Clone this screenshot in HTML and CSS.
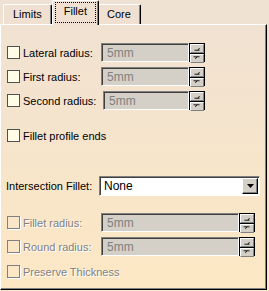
FILE: index.html
```html
<!DOCTYPE html>
<html lang="en">
<head>
  <meta charset="UTF-8" />
  <title>Fillet</title>
  <link rel="stylesheet" href="styles.css">
</head>
<body>
  <div class="dialog">
    <div class="tabs">
      <div class="tab">Limits</div>
      <div class="tab active"><span class="focus">Fillet</span></div>
      <div class="tab">Core</div>
    </div>

    <div class="panel">
      <div class="row">
        <label class="check"><span class="box"></span>Lateral radius:</label>
        <div class="field"><span class="value">5mm</span></div>
        <div class="spin">
          <span class="spin-btn"><svg width="14" height="7" viewBox="0 0 14 7"><path d="M4 5.5H10M8 5.5L10 3" stroke="#000" fill="none"/></svg></span>
          <span class="spin-btn"><svg width="14" height="7" viewBox="0 0 14 7"><path d="M3 1.5H10M7 1.5L5 4" stroke="#000" fill="none"/></svg></span>
        </div>
      </div>
      <div class="row">
        <label class="check"><span class="box"></span>First radius:</label>
        <div class="field"><span class="value">5mm</span></div>
        <div class="spin">
          <span class="spin-btn"><svg width="14" height="7" viewBox="0 0 14 7"><path d="M4 5.5H10M8 5.5L10 3" stroke="#000" fill="none"/></svg></span>
          <span class="spin-btn"><svg width="14" height="7" viewBox="0 0 14 7"><path d="M3 1.5H10M7 1.5L5 4" stroke="#000" fill="none"/></svg></span>
        </div>
      </div>
      <div class="row">
        <label class="check"><span class="box"></span>Second radius:</label>
        <div class="field shifted"><span class="value">5mm</span></div>
        <div class="spin">
          <span class="spin-btn"><svg width="14" height="7" viewBox="0 0 14 7"><path d="M4 5.5H10M8 5.5L10 3" stroke="#000" fill="none"/></svg></span>
          <span class="spin-btn"><svg width="14" height="7" viewBox="0 0 14 7"><path d="M3 1.5H10M7 1.5L5 4" stroke="#000" fill="none"/></svg></span>
        </div>
      </div>

      <div class="row profile">
        <label class="check solo"><span class="box"></span>Fillet profile ends</label>
      </div>

      <div class="row combo-row">
        <span class="plain">Intersection Fillet:</span>
        <div class="combo">
          <span class="combo-value">None</span>
          <span class="combo-btn"><svg width="7" height="4" viewBox="0 0 7 4"><path d="M0 0H7L3.5 4Z" fill="#000"/></svg></span>
        </div>
      </div>

      <div class="row off">
        <label class="check"><span class="box"></span>Fillet radius:</label>
        <div class="field wide"><span class="value">5mm</span></div>
        <div class="spin">
          <span class="spin-btn"><svg width="14" height="7" viewBox="0 0 14 7"><path d="M4 5.5H10M8 5.5L10 3" stroke="#000" fill="none"/></svg></span>
          <span class="spin-btn"><svg width="14" height="7" viewBox="0 0 14 7"><path d="M3 1.5H10M7 1.5L5 4" stroke="#000" fill="none"/></svg></span>
        </div>
      </div>
      <div class="row off">
        <label class="check"><span class="box"></span>Round radius:</label>
        <div class="field wide"><span class="value">5mm</span></div>
        <div class="spin">
          <span class="spin-btn"><svg width="14" height="7" viewBox="0 0 14 7"><path d="M4 5.5H10M8 5.5L10 3" stroke="#000" fill="none"/></svg></span>
          <span class="spin-btn"><svg width="14" height="7" viewBox="0 0 14 7"><path d="M3 1.5H10M7 1.5L5 4" stroke="#000" fill="none"/></svg></span>
        </div>
      </div>
      <div class="row off thick">
        <label class="check solo"><span class="box"></span>Preserve Thickness</label>
      </div>
    </div>
  </div>
</body>
</html>
```

FILE: styles.css
```css
* {
  box-sizing: border-box;
}
body {
  margin: 0;
  background-color: #fbe8c8;
  font-family: "Liberation Sans", Arial, sans-serif;
  font-size: 11px;
  color: #000;
}
.dialog {
  width: 269px;
  height: 291px;
  display: flex;
  flex-direction: column;
  background: linear-gradient(#efe1d3, #fde8c4);
}
.tabs {
  display: flex;
  align-items: flex-end;
  height: 24px;
  padding-left: 3px;
}
.tab {
  height: 20px;
  padding: 3px 9px 0 9px;
  border-top: 1px solid #fff;
  border-left: 1px solid #fff;
  border-right: 1px solid #000;
  border-top-left-radius: 2px;
  border-top-right-radius: 2px;
  box-shadow: inset -1px 0 #808080;
  background-color: #efe0d2;
}
.tab.active {
  height: 25px;
  margin: 0 -1px -1px 0;
  padding: 1px 2px 0 2px;
  position: relative;
  z-index: 1;
}
.tab.active + .tab {
  padding-left: 8px;
}
.focus {
  display: block;
  height: 21px;
  padding: 2px 8px 0 8px;
  border: 1px dotted #000;
}
.panel {
  flex: 1;
  width: 267px;
  border-top: 1px solid #fff;
  border-left: 1px solid #fff;
  border-right: 1px solid #000;
  border-bottom: 1px solid #000;
  box-shadow: inset -1px -1px #808080;
  padding: 18px 0 0 6px;
  margin-bottom: 1px;
}
.row {
  display: flex;
  align-items: center;
  height: 19px;
  margin-bottom: 5px;
}
.check {
  display: flex;
  align-items: center;
  width: 94px;
  flex-shrink: 0;
  white-space: nowrap;
}
.check.solo {
  width: auto;
}
.box {
  width: 13px;
  height: 13px;
  flex-shrink: 0;
  margin-right: 3px;
  border: 1px solid #505050;
  background-color: #fffde6;
}
.field {
  width: 88px;
  height: 19px;
  padding: 2px 0 0 5px;
  background-color: #d4d0c8;
  border-top: 1px solid #808080;
  border-left: 1px solid #808080;
  border-right: 1px solid #fff;
  border-bottom: 1px solid #fff;
  box-shadow: inset 1px 1px #404040;
  color: #808080;
  font-size: 12px;
}
.field.shifted {
  width: 86px;
  margin-left: 2px;
}
.field.wide {
  width: 138px;
}
.spin {
  display: flex;
  flex-direction: column;
  width: 16px;
  height: 19px;
  background-color: #000;
  padding: 1px;
  gap: 1px;
}
.spin-btn {
  flex: 1;
  display: flex;
  align-items: center;
  justify-content: center;
  background-color: #d4d0c8;
  border-top: 1px solid #fff;
  border-left: 1px solid #fff;
  border-right: 1px solid #808080;
  border-bottom: 1px solid #808080;
}
.profile {
  margin-top: 16px;
}
.combo-row {
  margin-top: 31px;
  margin-bottom: 18px;
}
.plain {
  width: 93px;
  margin-left: -1px;
  white-space: nowrap;
}
.combo {
  display: flex;
  align-items: center;
  width: 161px;
  height: 20px;
  background-color: #fff;
  border-top: 1px solid #808080;
  border-left: 1px solid #808080;
  border-right: 1px solid #fff;
  border-bottom: 1px solid #fff;
  box-shadow: inset 1px 1px #404040;
  padding: 1px 1px 1px 4px;
}
.combo-value {
  flex: 1;
  font-size: 12px;
}
.combo-btn {
  width: 16px;
  height: 16px;
  display: flex;
  align-items: center;
  justify-content: center;
  background-color: #d4d0c8;
  border-top: 1px solid #fff;
  border-left: 1px solid #fff;
  border-right: 1px solid #000;
  border-bottom: 1px solid #000;
  box-shadow: inset -1px -1px #808080;
}
.off .check {
  color: #808080;
  text-shadow: 1px 1px #fff;
}
.off .box {
  background-color: transparent;
  border-color: #808080;
  box-shadow: 1px 1px #fff;
}
.thick {
  margin-top: 6px;
}
```
